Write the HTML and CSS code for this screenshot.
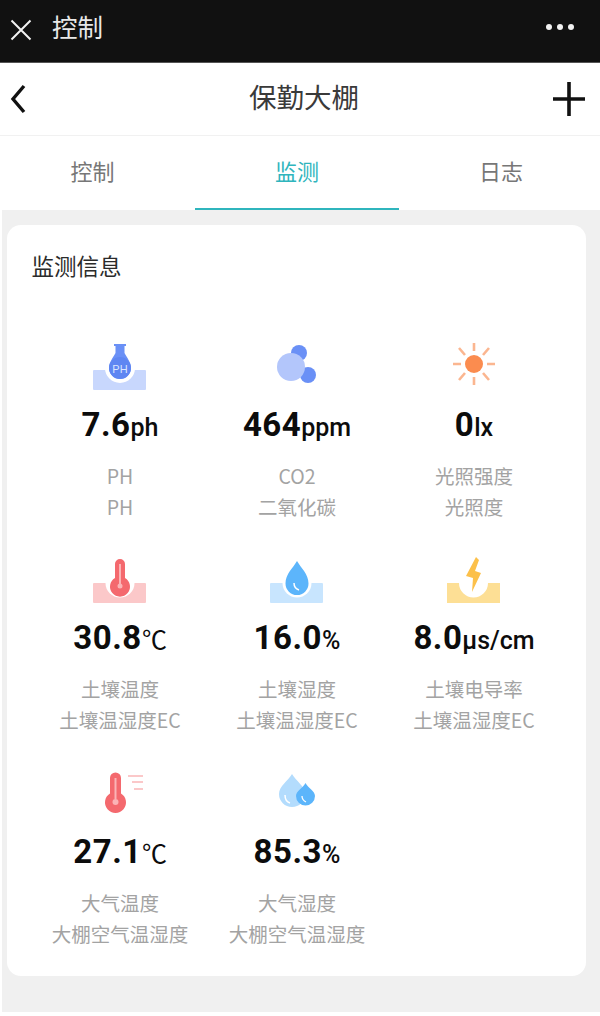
FILE: index.html
```html
<!DOCTYPE html>
<html lang="zh-CN">
<head>
<meta charset="utf-8">
<title>控制</title>
<link rel="stylesheet" href="styles.css">
</head>
<body>
<div class="page">
  <div class="wxbar">
    <svg class="wx-close" width="22" height="22" viewBox="0 0 22 22"><path d="M1.500 1.500 L20.500 20.500 M20.500 1.500 L1.500 20.500" stroke="#f2f2f2" stroke-width="2" fill="none"/></svg>
    <span class="wx-title">控制</span>
    <span class="wx-more"><i></i><i></i><i></i></span>
  </div>
  <div class="header">
    <svg class="back" width="16" height="30" viewBox="0 0 16 30"><path d="M14 2 L3 15 L14 28" stroke="#111" stroke-width="3.400" fill="none"/></svg>
    <span class="header-title">保勤大棚</span>
    <svg class="plus" width="32" height="34" viewBox="0 0 32 34"><path d="M16 0 V34 M0 17 H32" stroke="#111" stroke-width="3.600" fill="none"/></svg>
  </div>
  <div class="tabs">
    <div class="tab first">控制</div>
    <div class="tab active">监测</div>
    <div class="tab last">日志</div>
  </div>
  <main class="content">
    <section class="card">
      <h2 class="card-title">监测信息</h2>
      <div class="grid">
        <div class="item">
          <svg class="icon" width="56" height="50" viewBox="0 0 56 50">
            <rect x="1" y="26" width="53" height="20" rx="1" fill="#c8d7fd"/>
            <circle cx="28" cy="24" r="15" fill="#fff"/>
            <path d="M22 0 H34 V2 H32.500 V9 C35 14 39 18 39 24 A11 11 0 0 1 17 24 C17 18 21 14 23.500 9 V2 H22 Z" fill="#6a90f6"/>
            <circle cx="28" cy="24" r="11" fill="#5f86f2"/>
            <text x="28" y="29" class="ph-text">PH</text>
          </svg>
          <div class="value">7.6<small>ph</small></div>
          <div class="label">PH</div>
          <div class="label">PH</div>
        </div>
        <div class="item">
          <svg class="icon" width="56" height="50" viewBox="0 0 56 50">
            <circle cx="30" cy="9" r="8" fill="#6a90f6"/>
            <circle cx="39" cy="31" r="8" fill="#6a90f6"/>
            <circle cx="22" cy="23" r="14" fill="#b3c6fb"/>
          </svg>
          <div class="value">464<small>ppm</small></div>
          <div class="label">CO2</div>
          <div class="label">二氧化碳</div>
        </div>
        <div class="item">
          <svg class="icon" width="56" height="50" viewBox="0 0 56 50">
            <path d="M28 -1 V7 M28 33 V41 M7 20 H15 M41 20 H49 M13 4 L19 11 M43 4 L37 11 M13 36 L19 29 M43 36 L37 29" stroke="#fbb690" stroke-width="2.600" fill="none"/>
            <circle cx="28" cy="20" r="9" fill="#fb8c4f"/>
          </svg>
          <div class="value">0<small>lx</small></div>
          <div class="label">光照强度</div>
          <div class="label">光照度</div>
        </div>
        <div class="item">
          <svg class="icon" width="56" height="50" viewBox="0 0 56 50">
            <rect x="1" y="26" width="53" height="20" rx="1" fill="#fbc8c9"/>
            <circle cx="28" cy="26" r="14.500" fill="#fff"/>
            <path d="M23 7 A5 5 0 0 1 33 7 V21 A10 10 0 1 1 23 21 Z" fill="#f4696e"/>
            <path d="M28 7 V28" stroke="#fbb4b6" stroke-width="2" fill="none"/>
            <circle cx="28" cy="29" r="2.500" fill="#fbb4b6"/>
          </svg>
          <div class="value">30.8<small>℃</small></div>
          <div class="label">土壤温度</div>
          <div class="label">土壤温湿度EC</div>
        </div>
        <div class="item">
          <svg class="icon" width="56" height="50" viewBox="0 0 56 50">
            <rect x="1" y="26" width="53" height="20" rx="1" fill="#c8e5fe"/>
            <circle cx="28" cy="26" r="14.500" fill="#fff"/>
            <path d="M28 4 C32 11 39.500 17 39.500 26.500 A11.500 11.500 0 0 1 16.500 26.500 C16.500 17 24 11 28 4 Z" fill="#5cb5fb"/>
            <path d="M25 26 C25 30 27 32 30 33" stroke="#fff" stroke-width="1.500" fill="none"/>
          </svg>
          <div class="value">16.0<small>%</small></div>
          <div class="label">土壤湿度</div>
          <div class="label">土壤温湿度EC</div>
        </div>
        <div class="item">
          <svg class="icon" width="56" height="50" viewBox="0 0 56 50">
            <path d="M1 26 H13 A14.500 14.500 0 0 0 42 26 H54 V46 H1 Z" fill="#fddf95"/>
            <path d="M30 0 L20 19 L27 21 L26 35 L35 16 L29 14 L33 3 Z" fill="#fcc04a"/>
          </svg>
          <div class="value">8.0<small>μs/cm</small></div>
          <div class="label">土壤电导率</div>
          <div class="label">土壤温湿度EC</div>
        </div>
        <div class="item">
          <svg class="icon" width="56" height="50" viewBox="0 0 56 50">
            <path d="M18 7 A5.500 5.500 0 0 1 29 7 V22.500 A10.500 10.500 0 1 1 18 22.500 Z" fill="#f4696e"/>
            <path d="M23.500 7 V28" stroke="#fbb4b6" stroke-width="2" fill="none"/>
            <circle cx="23.500" cy="31" r="3" fill="#fbb4b6"/>
            <path d="M36 5 H51 M40 11 H51 M42 18 H51" stroke="#fbc8c9" stroke-width="1.800" fill="none"/>
          </svg>
          <div class="value">27.1<small>℃</small></div>
          <div class="label">大气温度</div>
          <div class="label">大棚空气温湿度</div>
        </div>
        <div class="item">
          <svg class="icon" width="56" height="50" viewBox="0 0 56 50">
            <path d="M23 3 C27 10 36 15 36 23 A13 13 0 0 1 10 23 C10 15 19 10 23 3 Z" fill="#b3dcfd"/>
            <path d="M16 24 C16 28 18 31 21 32" stroke="#fff" stroke-width="1.500" fill="none"/>
            <path d="M36.500 12 C39 17 46 20 46 25 A9.500 9.500 0 0 1 27 25 C27 20 34 17 36.500 12 Z" fill="#5cb5fb"/>
            <path d="M33 25 C33 28 35 30 37 31" stroke="#fff" stroke-width="1.300" fill="none"/>
          </svg>
          <div class="value">85.3<small>%</small></div>
          <div class="label">大气湿度</div>
          <div class="label">大棚空气温湿度</div>
        </div>
      </div>
    </section>
  </main>
</div>
</body>
</html>
```
FILE: styles.css
```css
* { box-sizing: border-box; }
html, body { margin: 0; padding: 0; background: #fff; }
body {
  width: 600px;
  height: 1016px;
  overflow: hidden;
  font-family: "Noto Sans CJK SC", "Liberation Sans", sans-serif;
}
.page { display: flex; flex-direction: column; height: 1012px; }
.wxbar {
  height: 63px;
  flex: none;
  background: #111;
  border-bottom: 1px solid #555;
  display: flex;
  align-items: center;
  padding: 0 26px 2px 10px;
  color: #e8e8e8;
}
.wx-close { flex: none; }
.wx-title { margin-left: 20px; font-size: 25.500px; line-height: 32px; margin-bottom: 9px; }
.wx-more { margin-left: auto; display: flex; gap: 5px; margin-bottom: 6px; }
.wx-more i { width: 6px; height: 6px; border-radius: 50%; background: #f2f2f2; }
.header {
  height: 73px;
  flex: none;
  display: flex;
  align-items: center;
  justify-content: space-between;
  padding: 0 15px 0 10px;
  position: relative;
  border-bottom: 1px solid #f1f1f1;
}
.header-title {
  position: absolute;
  left: 8px;
  right: 0;
  top: 14px;
  text-align: center;
  font-size: 27.500px;
  line-height: 38px;
  color: #3a3a3a;
}
.tabs { height: 74px; flex: none; display: grid; grid-template-columns: 195px 204px 1fr; }
.tab {
  display: flex;
  align-items: center;
  justify-content: center;
  font-size: 22px;
  color: #777;
  padding-bottom: 6px;
}
.tab.first { padding-right: 10px; }
.tab.last { padding-left: 3px; }
.tab.active { color: #2fb5bd; border-bottom: 2px solid #2fb5bd; padding-bottom: 4px; }
.content { flex: 1; background: #f0f0f0; margin-left: 2px; padding: 15px 14px 0 5px; }
.card {
  height: 751px;
  background: #fff;
  border-radius: 14px;
  padding: 20px 24px 0 24.500px;
}
.card-title {
  margin: 0;
  font-size: 22.500px;
  font-weight: 400;
  line-height: 40px;
  color: #2b2b2b;
}
.grid {
  display: grid;
  grid-template-columns: repeat(3, 177px);
  grid-auto-rows: 213.400px;
  margin-top: 59px;
}
.item { display: flex; flex-direction: column; align-items: center; }
.icon { flex: none; display: block; height: 50px; overflow: visible; }
.value {
  margin-top: 11px;
  font-family: Roboto, "Liberation Sans", sans-serif;
  font-weight: 700;
  font-size: 33px;
  letter-spacing: 0.500px;
  line-height: 40px;
  color: #0c0c0c;
  white-space: nowrap;
}
.value small { font-size: 25px; font-weight: 500; letter-spacing: 0; }
.label {
  font-size: 19.500px;
  line-height: 31px;
  color: #a3a3a3;
  white-space: nowrap;
}
.value + .label { margin-top: 12px; }
.ph-text { font-family: "Liberation Sans", sans-serif; font-size: 11px; fill: #dbe5ff; text-anchor: middle; }
```
